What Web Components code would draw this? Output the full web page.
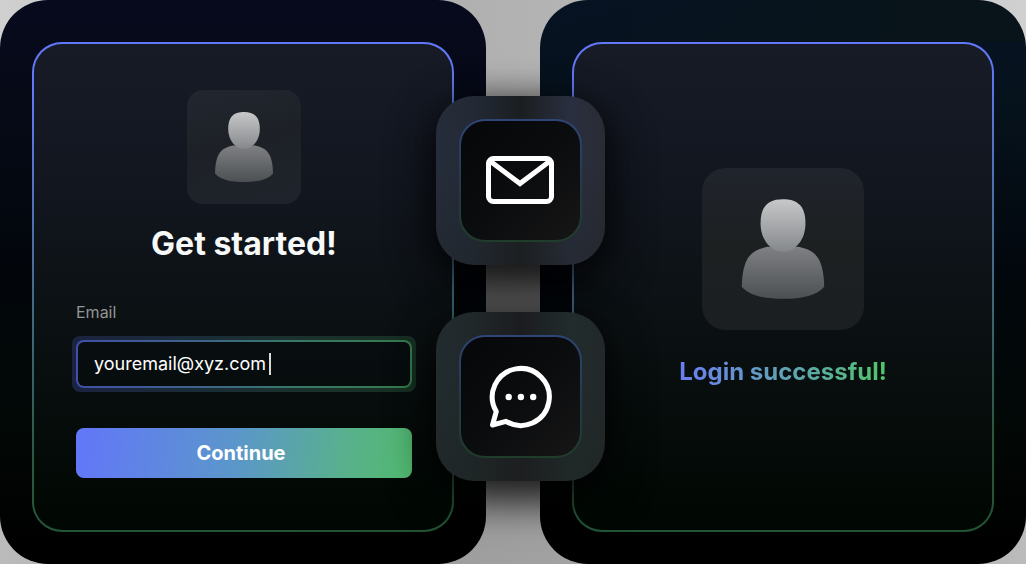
<!DOCTYPE html>
<html lang="en">
<head>
<meta charset="utf-8">
<meta name="viewport" content="width=device-width, initial-scale=1">
<title>Email sign-in flow</title>
<style>
  body { margin: 0; font-family: Inter, "Liberation Sans", sans-serif; color: #fff; background: #000; }
</style>
</head>
<body>
<login-flow>
  <glass-panel tone="navy">
    <signup-form></signup-form>
  </glass-panel>
  <glass-panel tone="teal">
    <login-result>Login successful!</login-result>
  </glass-panel>
  <app-badge slot="badges" tone="blue" icon="mail"></app-badge>
  <app-badge slot="badges" tone="green" icon="chat"></app-badge>
</login-flow>

<script>
class BaseElement extends HTMLElement {
  render(css, html) {
    this.attachShadow({ mode: 'open' }).innerHTML =
      `<style>*{box-sizing:border-box}${css}</style>${html}`;
  }
}

class LoginFlow extends BaseElement {
  connectedCallback() {
    this.render(`
      :host {
        display: block; position: relative; overflow: hidden;
        background:
          linear-gradient(180deg, #0000 12%, #00000073 48%, #00000073 60%, #0000001a 94%),
          linear-gradient(90deg, #d0d0d0 0, #b0b0b0 45%, #b4b4b4 55%, #d0d0d0 100%);
      }
      main { display: grid; grid-template-columns: 1fr 1fr; gap: 54px; min-height: 100vh; }
      /* The badges float over the seam between both panels. */
      .badges {
        position: absolute; top: 96px; left: calc(50% - 77px); z-index: 1;
        display: grid; gap: 47px;
      }
    `, `<main><slot></slot></main><div class="badges"><slot name="badges"></slot></div>`);
  }
}

class GlassPanel extends BaseElement {
  connectedCallback() {
    this.render(`
      :host {
        display: flex; padding: 42px 32px 32px; border-radius: 48px;
        background: linear-gradient(180deg, #070a1d 0, #060a16 20%, #02060b 48%, #020806 75%, #000 97%);
      }
      :host([tone="teal"]) {
        background:
          linear-gradient(90deg, #08132400 0, #08141a 75%) 0 0 / 100% 42px no-repeat,
          linear-gradient(180deg, #071224 0, #06121b 20%, #02070d 48%, #020806 75%, #000 97%);
      }
      section {
        flex: 1; display: flex; flex-direction: column;
        border: 2px solid transparent; border-radius: 30px; padding: 46px 42px 52px;
        background:
          linear-gradient(180deg, #171b26 0, #12161f 30%, #0d1216 50%, #070d0c 74%, #010803 97%) padding-box,
          linear-gradient(175deg, #6278f8 0, #6278f8 10%, #5674c8 24%, #3d6c80 52%, #275a40 80%, #215233 100%) border-box;
      }
    `, `<section><slot></slot></section>`);
  }
}

class UserAvatar extends BaseElement {
  connectedCallback() {
    this.render(`
      :host { display: block; width: 114px; height: 114px; border-radius: 16px;
        background: linear-gradient(165deg, #22262f, #1d2127 45%, #1f232b); }
      :host([size="large"]) { width: 162px; height: 162px; border-radius: 24px;
        background: linear-gradient(180deg, #20242c, #1c2021 50%, #1b1f22); }
      svg { display: block; width: 100%; height: 100%; }
    `, `<svg viewBox="0 0 114 114" role="img" aria-label="User">
      <defs>
        <linearGradient id="h" x1="0" y1="0" x2="0" y2="1"><stop stop-color="#c8c8ca"/><stop offset="1" stop-color="#85888b"/></linearGradient>
        <linearGradient id="b" x1="0" y1="0" x2="0" y2="1"><stop stop-color="#7e8083"/><stop offset="1" stop-color="#4d5053"/></linearGradient>
      </defs>
      <path fill="url(#b)" d="M46 55.500C35 58 28.500 62 28 83.500C33 89.500 43 92 57 92C71 92 81 89.500 86 83.500C85.500 62 79 58 68 55.500Z"/>
      <path fill="url(#h)" d="M57 22C66 22 72.800 25.500 72.800 39C72.800 51 65 59 57 59C49 59 41.200 51 41.200 39C41.200 25.500 48 22 57 22Z"/>
    </svg>`);
  }
}

class SignupForm extends BaseElement {
  connectedCallback() {
    this.render(`
      :host { display: block; margin-right: -2px; }
      form { display: flex; flex-direction: column; }
      user-avatar { align-self: center; }
      h1 { margin: 20px 0 38px; font-size: 32px; line-height: 40px; font-weight: 700; text-align: center; color: #f7f8f8; }
      label { font-size: 16px; line-height: 20px; color: #929595; margin-bottom: 18px; }
      .field {
        display: flex; align-items: center; height: 48px; padding: 0 16px;
        border: 2px solid transparent; border-radius: 8px; margin-bottom: 40px;
        position: relative;
        background:
          linear-gradient(#080d10, #070d0d) padding-box,
          linear-gradient(90deg, #414fa8, #3d628b 35%, #387866 65%, #347a4f) border-box;
      }
      /* Focus halo around the field. */
      .field::before {
        content: ""; position: absolute; inset: -6px; z-index: -1; border-radius: 8px;
        background: linear-gradient(90deg, #1b2340, #1a2c38 35%, #1a322d 65%, #173022);
      }
      .wrap { position: relative; z-index: 0; display: flex; flex-direction: column; }
      input {
        field-sizing: content; min-width: 20px; border: 0; padding: 0; margin: 0; outline: 0;
        background: none; color: #fff; font: 400 18px/24px Inter, "Liberation Sans", sans-serif;
      }
      .caret { width: 2px; height: 22px; margin-left: 3px; background: #d8dada; }
      button {
        height: 50px; border: 0; border-radius: 8px; padding: 0 6px 0 0; cursor: pointer;
        color: #fff; font: 700 20px/24px Inter, "Liberation Sans", sans-serif;
        background: linear-gradient(98deg, #6278f7 3%, #5b96cb 47%, #58b18c 80%, #52ba6f 100%);
      }
    `, `<form>
      <user-avatar></user-avatar>
      <h1>Get started!</h1>
      <div class="wrap">
        <label for="email">Email</label>
        <div class="field"><input id="email" type="text" inputmode="email" value="youremail@xyz.com" autocomplete="off"><span class="caret"></span></div>
      </div>
      <button type="button">Continue</button>
    </form>`);
  }
}

class LoginResult extends BaseElement {
  connectedCallback() {
    this.render(`
      :host { flex: 1; display: flex; flex-direction: column; align-items: center; padding-top: 78px; }
      h2 {
        margin: 26px 0 0; font-size: 24px; line-height: 32px; font-weight: 700;
        color: transparent; background: linear-gradient(95deg, #6b7ff0 3%, #629dc0 42%, #5aad9d 68%, #51c56e 97%);
        -webkit-background-clip: text; background-clip: text;
      }
    `, `<user-avatar size="large"></user-avatar><h2><slot></slot></h2>`);
  }
}

const ICONS = {
  mail: `<svg viewBox="0 0 72 72" fill="none" stroke="#fff" stroke-width="5" role="img" aria-label="Mail">
    <rect x="3.500" y="13.500" width="63" height="43" rx="5"/>
    <path d="M5 16L35 38.500L65 16" stroke-width="5"/></svg>`,
  chat: `<svg viewBox="0 0 72 72" fill="none" stroke="#fff" stroke-width="5" stroke-linejoin="round" role="img" aria-label="Chat">
    <path d="M7.500 64L21 60.300A28.500 28.500 0 1 0 11.300 50.500Z"/>
    <g fill="#fff" stroke="none"><circle cx="23.700" cy="36" r="3.200"/><circle cx="35.900" cy="36" r="3.200"/><circle cx="48.200" cy="36" r="3.200"/></g></svg>`
};

class AppBadge extends BaseElement {
  connectedCallback() {
    this.render(`
      :host {
        display: block; position: relative; padding: 23px; border-radius: 38px;
        background:
          linear-gradient(180deg, #0000 40%, #1e222366 100%),
          linear-gradient(90deg, #262d3a 0, #232a36 22%, #1b1e20 50%, #292f3f 80%, #2a2c34 100%);
      }
      /* The shadow sits under both badges, so neither darkens the other. */
      :host::before {
        content: ""; position: absolute; inset: 0; z-index: -1; border-radius: 38px;
        box-shadow: 0 16px 48px 0 #000000b3, 0 10px 36px 0 #00000080;
      }
      :host([tone="green"]) {
        background:
          linear-gradient(180deg, #0000 40%, #1e222066 100%),
          linear-gradient(90deg, #222b2e 0, #20282a 22%, #1c1c20 50%, #212c2d 80%, #23282a 100%);
      }
      div {
        display: grid; place-items: center; width: 123px; height: 123px;
        border: 2px solid transparent; border-radius: 26px;
        background:
          linear-gradient(135deg, #07080a 10%, #0b0c0e 50%, #161616 100%) padding-box,
          linear-gradient(180deg, #304578, #263a4c 50%, #203c2a) border-box;
      }
      svg { display: block; width: 72px; height: 72px; }
    `, `<div>${ICONS[this.getAttribute('icon')]}</div>`);
  }
}

customElements.define('user-avatar', UserAvatar);
customElements.define('signup-form', SignupForm);
customElements.define('login-result', LoginResult);
customElements.define('app-badge', AppBadge);
customElements.define('glass-panel', GlassPanel);
customElements.define('login-flow', LoginFlow);
</script>
</body>
</html>
